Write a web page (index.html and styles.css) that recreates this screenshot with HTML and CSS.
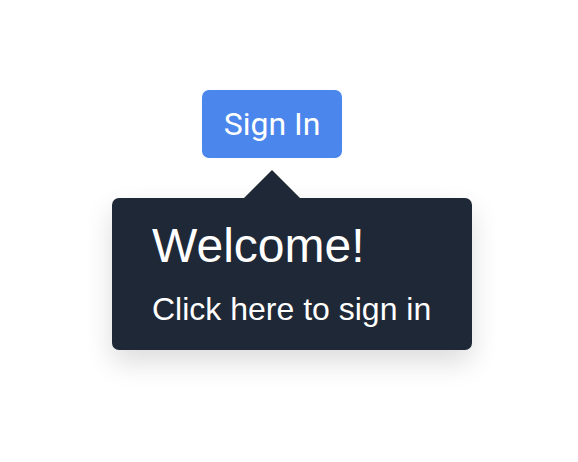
FILE: index.html
```html
<!DOCTYPE html>
<html lang="en">
<head>
<meta charset="utf-8">
<title>Sign In tooltip</title>
<link rel="stylesheet" href="styles.css">
</head>
<body>
<div class="anchor">
  <button class="signin" type="button">Sign In</button>
  <div class="tooltip" role="tooltip">
    <h2 class="tooltip-title">Welcome!</h2>
    <p class="tooltip-text">Click here to sign in</p>
  </div>
</div>
</body>
</html>
```
FILE: styles.css
```css
html, body {
  margin: 0;
  padding: 0;
  background: #ffffff;
}
body {
  width: 578px;
  height: 462px;
  overflow: hidden;
}
.anchor {
  position: relative;
  display: inline-block;
  margin: 90px 0 0 202px;
}
.signin {
  display: block;
  box-sizing: border-box;
  width: 140px;
  height: 68px;
  padding: 0;
  border: 0;
  border-radius: 7px;
  background: #4a86eb;
  color: #ffffff;
  font-family: Roboto, "Noto Sans", sans-serif;
  font-size: 32px;
  line-height: 68px;
  text-align: center;
  cursor: pointer;
}
.tooltip {
  position: absolute;
  top: 108px;
  left: -90px;
  box-sizing: border-box;
  width: 360px;
  height: 152px;
  padding: 20px 40px 0;
  background: #1f2836;
  border-radius: 7px;
  color: #ffffff;
  font-family: "Liberation Sans", Arial, sans-serif;
  box-shadow: 0 12px 28px rgba(0, 0, 0, 0.14);
}
.tooltip::before {
  content: "";
  position: absolute;
  top: -28px;
  left: 132px;
  width: 0;
  height: 0;
  border-left: 28px solid transparent;
  border-right: 28px solid transparent;
  border-bottom: 28px solid #1f2836;
}
.tooltip-title {
  margin: 0 0 18px;
  font-size: 48px;
  font-weight: normal;
  line-height: normal;
}
.tooltip-text {
  margin: 0;
  font-size: 32px;
  line-height: normal;
}
```
